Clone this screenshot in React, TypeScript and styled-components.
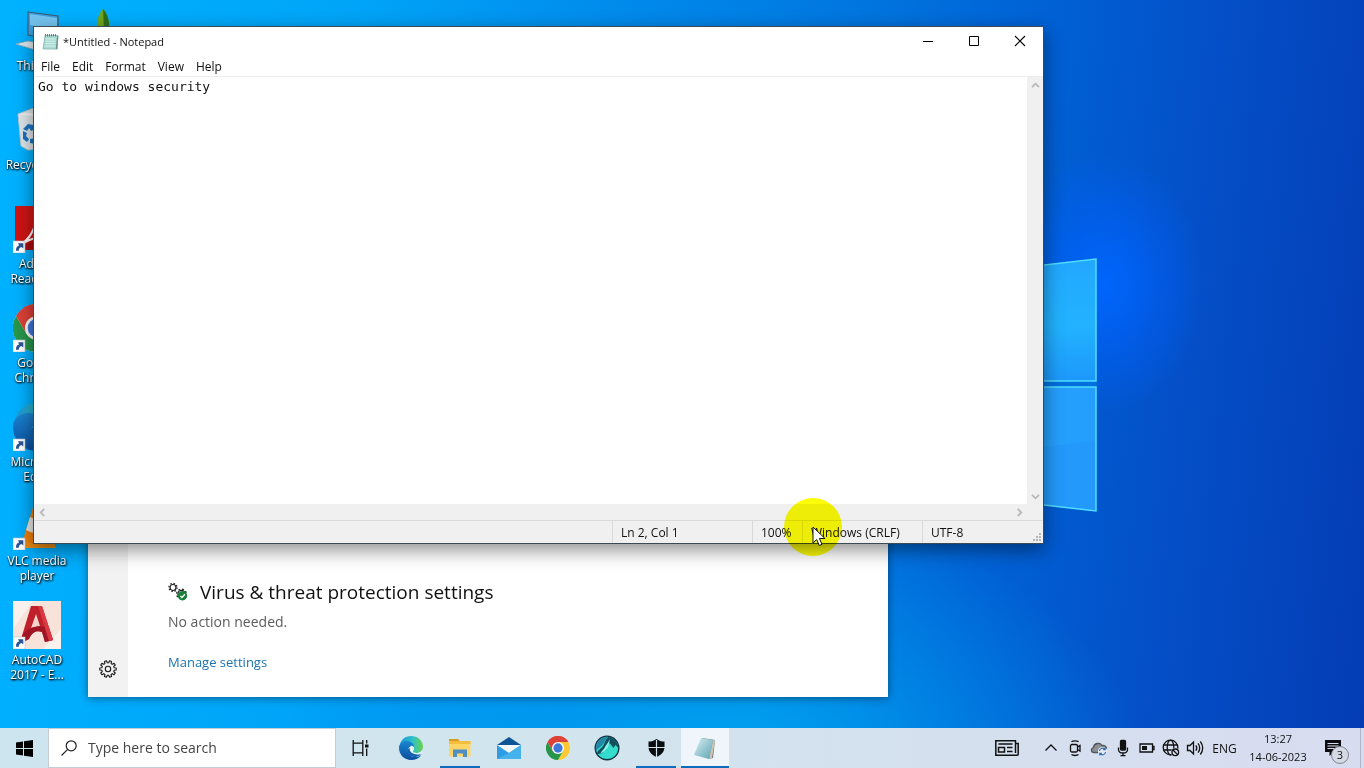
import React from "react";
import styled, { createGlobalStyle, css } from "styled-components";

const GlobalStyle = createGlobalStyle`
  *, *::before, *::after { box-sizing: border-box; }
  html, body, #root { height: 100%; }
  body { margin: 0; overflow: hidden; font-family: "Open Sans", "Noto Sans", sans-serif; font-size: 12px; color: #111; }
  button { font: inherit; color: inherit; border: 0; padding: 0; background: none; }
  svg { display: block; }
`;

const Screen = styled.div`
  position: relative;
  height: 100vh;
  display: flex;
  flex-direction: column;
  background:
    radial-gradient(ellipse 100px 130px at 81% 37%, rgba(0, 102, 255, 0.95), rgba(0, 98, 255, 0.5) 50%, rgba(0, 90, 240, 0) 100%),
    radial-gradient(ellipse 460px 300px at 55% 100%, rgba(0, 178, 246, 0.75), rgba(0, 150, 240, 0) 85%),
    linear-gradient(96deg, #00b2ff 0%, #00a4f8 25%, #008cec 42%, #0078e0 58%, #0062d6 72%, #0450c8 84%, #043cb4 100%);
`;

const Wallpaper = styled.svg`
  position: absolute;
  inset: 0;
  width: 100%;
  height: 100%;
`;

const Desktop = styled.main`
  position: relative;
  flex: 1;
  min-height: 0;
  overflow: hidden;
`;

const IconGrid = styled.div`
  display: grid;
  grid-auto-flow: column;
  grid-template-rows: repeat(7, 99px);
  grid-auto-columns: 74px;
  justify-content: start;
  padding-top: 7px;
`;

const Shortcut = styled.button`
  display: flex;
  flex-direction: column;
  align-items: center;
  gap: 3px;
  color: #fff;
  line-height: 15px;
  text-align: center;
  text-shadow: 1px 1px 2px #000, 0 1px 2px rgba(0, 0, 0, 0.8);
`;

const ShortcutArt = styled.svg`
  width: 48px;
  height: 48px;
`;

const ShortcutLabel = styled.span`
  width: 68px;
`;

const windowFrame = css`
  position: absolute;
  background: #fff;
  display: flex;
`;

const SecurityWindow = styled.section`
  ${windowFrame}
  inset: 120px 476px 31px 88px;
  box-shadow: 0 1px 8px rgba(0, 0, 0, 0.45);
`;

const Rail = styled.nav`
  width: 40px;
  padding-bottom: 8px;
  background: #f2f2f2;
  display: flex;
  flex-direction: column;
  justify-content: flex-end;
`;

const RailButton = styled.button`
  height: 40px;
  display: grid;
  place-items: center;
`;

const SecurityContent = styled.div`
  flex: 1;
  padding: 25px 40px;
  display: flex;
  flex-direction: column;
  justify-content: flex-end;
  align-items: flex-start;
`;

const SecurityHeading = styled.h2`
  margin: 0 0 6px;
  display: flex;
  align-items: center;
  gap: 12px;
  font-size: 19px;
  font-weight: 400;
  line-height: 28px;
`;

const SecurityStatus = styled.p`
  margin: 0 0 20px;
  font-size: 14px;
  line-height: 20px;
  color: #5c5c5c;
`;

const SecurityLink = styled.a`
  font-size: 13px;
  line-height: 20px;
  color: #1a73ad;
  text-decoration: none;
`;

const NotepadWindow = styled.section`
  ${windowFrame}
  flex-direction: column;
  inset: 26px 320px 184px 33px;
  border: 1px solid #3c4a55;
  box-shadow: 0 6px 18px rgba(0, 0, 0, 0.45);
`;

const TitleBar = styled.header`
  height: 28px;
  padding-left: 8px;
  display: flex;
  align-items: center;
  gap: 4px;
`;

const Title = styled.h1`
  margin: 0;
  flex: 1;
  font-size: 11px;
  font-weight: 400;
`;

const Captions = styled.div`
  display: flex;
  align-self: stretch;
`;

const CaptionButton = styled.button`
  width: 46px;
  display: grid;
  place-items: center;
`;

const MenuBar = styled.nav`
  height: 22px;
  display: flex;
  padding: 2px 1px 1px;
  border-bottom: 1px solid #ededed;
`;

const MenuItem = styled.button`
  padding: 0 6px;
`;

const Editor = styled.div`
  flex: 1;
  min-height: 0;
  display: grid;
  grid-template: 1fr 16px / 1fr 16px;
  background: #f0f0f0;
`;

const TextArea = styled.textarea`
  border: 0;
  outline: 0;
  resize: none;
  overflow: hidden;
  padding: 1px 4px;
  background: #fff;
  color: #111;
  font: 13px/17px "DejaVu Sans Mono", monospace;
`;

const ScrollBar = styled.div<{ $vertical?: boolean }>`
  display: flex;
  flex-direction: ${(p) => (p.$vertical ? "column" : "row")};
  justify-content: space-between;
`;

const ScrollButton = styled.button`
  width: 16px;
  height: 16px;
  display: grid;
  place-items: center;
`;

const StatusBar = styled.footer`
  height: 23px;
  display: grid;
  grid-template-columns: 1fr 140px 50px 120px 121px;
  align-items: stretch;
  background: #f0f0f0;
  border-top: 1px solid #dadada;
`;

const StatusCell = styled.span`
  display: flex;
  align-items: center;
  padding-left: 8px;
  padding-top: 1px;
  border-left: 1px solid #dadada;
  white-space: nowrap;
  &:first-child { border-left: 0; }
  &:last-child { justify-content: space-between; }
`;

const Grip = styled.svg`
  align-self: flex-end;
`;

const Halo = styled.div`
  position: absolute;
  left: 784px;
  top: 498px;
  width: 58px;
  height: 58px;
  border-radius: 50%;
  background: #fcfc08;
  mix-blend-mode: multiply;
`;

const Pointer = styled.svg`
  position: absolute;
  left: 812px;
  top: 526px;
`;

const Taskbar = styled.footer`
  position: relative;
  height: 40px;
  display: flex;
  background: linear-gradient(90deg, #cde5ef 0%, #d2e5ee 40%, #d4e1ee 65%, #d8dcf0 100%);
`;

const TaskButton = styled.button<{ $open?: boolean; $active?: boolean }>`
  position: relative;
  width: 48px;
  display: grid;
  place-items: center;
  background: ${(p) => (p.$active ? "#eff5fb" : "none")};
  &::after {
    content: "";
    position: absolute;
    bottom: 0;
    left: ${(p) => (p.$active ? 0 : "4px")};
    right: ${(p) => (p.$active ? 0 : "4px")};
    height: 2px;
    background: ${(p) => (p.$open || p.$active ? "#0f6cbd" : "transparent")};
  }
`;

const SearchBox = styled.label`
  width: 288px;
  display: flex;
  align-items: center;
  gap: 11px;
  padding: 0 12px;
  background: #fff;
  border: 1px solid #c3cdd2;
`;

const SearchInput = styled.input`
  flex: 1;
  min-width: 0;
  border: 0;
  outline: 0;
  padding: 0;
  background: none;
  font: 14px/20px "Open Sans", "Noto Sans", sans-serif;
  &::placeholder { color: #444; opacity: 1; }
`;

const Apps = styled.div`
  display: flex;
  gap: 1px;
  padding-left: 3px;
  flex: 1;
`;

const Tray = styled.div`
  display: flex;
`;

const TrayButton = styled.button<{ $width?: number }>`
  width: ${(p) => p.$width ?? 24}px;
  display: grid;
  place-items: center;
`;

const NewsButton = styled(TrayButton)`
  margin-right: 12px;
`;

const Clock = styled.button`
  width: 72px;
  font-size: 11px;
  line-height: 18px;
`;

const ActionButton = styled(TrayButton)`
  position: relative;
  margin-right: 8px;
`;

const Badge = styled.span`
  position: absolute;
  left: 17px;
  top: 18px;
  width: 18px;
  height: 18px;
  border: 1px solid #83868c;
  border-radius: 50%;
  background: #d6dae4;
  font-size: 11px;
  line-height: 16px;
  text-align: center;
`;

const ShowDesktop = styled.button`
  width: 4px;
  border-left: 1px solid #aeb6c6;
`;

const LinkArrow = () => (
  <g>
    <rect x="0" y="36" width="12" height="12" fill="#fff" stroke="#b8c4cc" strokeWidth=".6" />
    <path d="M3 45.8c-.2-3 1-5 3.200-5.400L5 38.300h5.300v5.300L8.500 42c-1.800.6-2.700 1.700-2.700 3.800z" fill="#2a5599" />
  </g>
);

const ChromeShape = () => (
  <>
    <circle cx="24" cy="24" r="24" fill="#fff" />
    <path d="M24 24 3.200 12A24 24 0 0 1 44.800 12z" fill="#dd4137" />
    <path d="M24 12H44.800A24 24 0 0 1 24 48L34.400 30z" fill="#fcc934" />
    <path d="M13.600 30 3.200 12A24 24 0 0 0 24 48L34.400 30z" fill="#27964b" />
    <path d="M24 12H44.800A24 24 0 0 0 3.200 12L13.600 30z" fill="#dd4137" />
    <circle cx="24" cy="24" r="12" fill="#fff" />
    <circle cx="24" cy="24" r="9.300" fill="#3f78dc" />
  </>
);

const EdgeShape = ({ id }: { id: string }) => (
  <>
    <defs>
      <linearGradient id={id + "a"} x1="0" y1=".3" x2="1" y2=".3">
        <stop offset="0" stopColor="#1c92d8" />
        <stop offset=".55" stopColor="#2cc0c8" />
        <stop offset="1" stopColor="#6bd24e" />
      </linearGradient>
      <linearGradient id={id + "b"} x1="0" y1="0" x2="0" y2="1">
        <stop offset="0" stopColor="#1a86d2" />
        <stop offset="1" stopColor="#0b4d9e" />
      </linearGradient>
    </defs>
    <path d="M1 21C3 8 12 0 24 0c14 0 24 10 24 21 0 8-6 13-13 13-5 0-8-2-7-4 5-5 1-14-8-14-9 0-17 1-19 5z" fill={`url(#${id}a)`} />
    <path d="M0 24c0-8 7-14 15-14 9 0 15 6 15 12-3-3-10-2-12 5-2 8 6 16 15 15 5 0 9-2 12-4-5 7-12 10-21 10C11 48 0 38 0 24z" fill={`url(#${id}b)`} />
    <path d="M18 27c-3 8 5 16 15 15 5-1 8-3 12-5-8 1-18-1-19-10-3-4-7-3-8 0z" fill="#1461ae" />
    <path d="M25 19c-5 3-5 11 1 15 6 4 14 3 19 0 1-2 2-4 2-5-3 4-8 5-12 5-5 0-8-2-7-4 4-3 2-9-3-11z" fill="#e3f2f6" />
  </>
);

const ShieldIcon = () => (
  <svg width="17" height="18" viewBox="0 0 17 18">
    <path d="M8.500 0c2.400 1.700 4.900 2.500 8 2.600V8c0 4.800-3.200 7.900-8 10C3.700 15.900.5 12.800.5 8V2.600c3.100-.1 5.600-.9 8-2.600z" fill="#0b0d10" />
    <path d="M8.500 1v17M0 8.500h17" stroke="#d4e3ee" strokeWidth="1.200" />
  </svg>
);

const NotepadIcon = () => (
  <svg width="17" height="17" viewBox="0 0 17 17">
    <path d="M3 2.500h13l-1 13.500H1z" fill="#a9dcd2" stroke="#86b3ae" strokeWidth=".8" />
    <path d="M15 3h1.300l-1 13-1.500.3z" fill="#6d9092" />
    <path d="M4 6h9.500M3.800 8.300h9.500M3.600 10.600h9.500M3.300 13h9.500" stroke="#d6efeb" strokeWidth=".9" />
    <path d="M3.500 1v2.500M5.500 1v2.500M7.500 1v2.500M9.500 1v2.500M11.500 1v2.500M13.500 1v2.500" stroke="#50777a" strokeWidth=".9" />
  </svg>
);

const Gear = ({ size, teeth = 8 }: { size: number; teeth?: number }) => {
  const points: string[] = [];
  for (let i = 0; i < teeth; i++) {
    const step = (Math.PI * 2) / teeth;
    [[-0.32, 6.3], [-0.2, 8.3], [0.2, 8.3], [0.32, 6.3]].forEach(([offset, radius]) => {
      const angle = (i + offset) * step;
      points.push(`${(9 + radius * Math.cos(angle)).toFixed(2)},${(9 + radius * Math.sin(angle)).toFixed(2)}`);
    });
  }
  return (
    <svg width={size} height={size} viewBox="0 0 18 18" fill="none" stroke="#1a1a1a" strokeWidth="1.100" strokeLinejoin="round">
      <polygon points={points.join(" ")} />
      <circle cx="9" cy="9" r="2.700" />
    </svg>
  );
};

const SettingsGears = () => (
  <svg width="20" height="20" viewBox="0 0 20 20" fill="none">
    <circle cx="5" cy="5.500" r="3" stroke="#222" strokeWidth="1.200" />
    <circle cx="5" cy="5.500" r="4.100" stroke="#222" strokeWidth="1.200" strokeDasharray="1.500 1.720" />
    <circle cx="13.500" cy="12" r="3.600" stroke="#222" strokeWidth="1.200" />
    <circle cx="13.500" cy="12" r="4.900" stroke="#222" strokeWidth="1.200" strokeDasharray="1.900 1.950" />
    <circle cx="14.500" cy="13.800" r="4.700" fill="#16803a" />
    <path d="m12.300 13.900 1.600 1.600 3-3.200" stroke="#fff" strokeWidth="1.300" />
  </svg>
);

const Chevron = ({ turn }: { turn: number }) => (
  <svg width="9" height="9" viewBox="0 0 9 9">
    <path d="M1 6.200 4.500 2.700 8 6.200" fill="none" stroke="#b9b9b9" strokeWidth="1.800" transform={`rotate(${turn} 4.500 4.500)`} />
  </svg>
);

const shortcuts: { name: string; label?: string; art: React.ReactNode }[] = [
  {
    name: "pc",
    label: "This PC",
    art: (
      <>
        <path d="M15 5 45 9v25L15 28z" fill="#3c9fe0" stroke="#3c5c74" strokeWidth="1.200" />
        <path d="M17 7 44 11v12L17 18z" fill="#74c4ef" />
        <path d="m3 37 12-3 26 5-12 6z" fill="#dfe9ee" stroke="#93aab8" strokeWidth=".8" />
      </>
    ),
  },
  {
    name: "bin",
    label: "Recycle Bin",
    art: (
      <>
        <path d="M5 8 21 2l22 4-5 36-23 2-7-4z" fill="#dfe6ea" stroke="#b9c8d0" strokeWidth="1" />
        <path d="m5 8 16-1 22-1-15 5z" fill="#f6f8f9" />
        <path d="m15 18 5 1 2 4-4 2-2-3-2 3-4-2zM10 25l4 2-1 3 3 3-2 3-4-3zM17 33l6-1 1-4 3 6-4 4-6-1z" fill="#1c74c4" />
      </>
    ),
  },
  {
    name: "reader",
    label: "Adobe Reader XI",
    art: (
      <>
        <rect x="2" y="1" width="44" height="44" fill="#cf1415" />
        <path d="M2 45h44V22z" fill="#a80c0d" />
        <path d="M8 39c8-4 14-15 15-24 0-6 4-6 3 0-1 6 4 15 15 16-10-1-22 2-33 8z" fill="none" stroke="#fff" strokeWidth="2" />
        <LinkArrow />
      </>
    ),
  },
  { name: "chrome", label: "Google Chrome", art: <><ChromeShape /><LinkArrow /></> },
  { name: "edge", label: "Microsoft Edge", art: <><EdgeShape id="desk" /><LinkArrow /></> },
  {
    name: "vlc",
    label: "VLC media player",
    art: (
      <>
        <path d="M8 37h32l3 9H5z" fill="#ee8a12" />
        <path d="M21 2h6l11 36c-7 5-21 5-28 0z" fill="#f07f0c" />
        <path d="m17 15-4 13c6 4 16 4 22 0l-4-13c-4 2-10 2-14 0z" fill="#e9e9e6" />
        <LinkArrow />
      </>
    ),
  },
  {
    name: "autocad",
    label: "AutoCAD 2017 - E...",
    art: (
      <>
        <rect width="48" height="48" fill="#f7e3da" />
        <path d="M0 0h20L0 28zM48 48H30l18-20z" fill="#f9f1ec" />
        <path d="M18 5h11l11 34-8 2-3-10c-5-2-10 0-13 7l-6 3-2-3z" fill="#c01f2c" />
        <path d="m23 13 4 12c-4 0-8 2-10 5z" fill="#f4d5cb" />
        <path d="M8 38c4-10 12-15 28-11l4 12-8 2-3-10c-6-2-10 0-13 7l-6 3z" fill="#a01524" />
        <path d="M29 5 40 39l-4 1L25 5z" fill="#d93a42" />
        <LinkArrow />
      </>
    ),
  },
  {
    name: "draw",
    art: (
      <>
        <path d="M16 2c5 5 7 14 6 22h-12c-1-8 1-17 6-22z" fill="#6fa61f" />
        <path d="M16 2c5 5 7 14 6 22h-5z" fill="#2d6f1a" />
      </>
    ),
  },
];

const TrayGlyph = ({ children }: { children: React.ReactNode }) => (
  <svg width="18" height="18" viewBox="0 0 18 18" fill="none" stroke="#111" strokeWidth="1.300">
    {children}
  </svg>
);

export default function App() {
  return (
    <Screen>
      <GlobalStyle />
      <Wallpaper viewBox="0 0 1364 768" preserveAspectRatio="none" aria-hidden="true">
        <defs>
          <linearGradient id="pane" x1="0" y1="0" x2="0" y2="1">
            <stop offset="0" stopColor="#22a8ff" />
            <stop offset=".55" stopColor="#22b2ff" />
            <stop offset="1" stopColor="#1c98fb" />
          </linearGradient>
        </defs>
        <path d="M940 277 1096 259V381H940z" fill="url(#pane)" stroke="#4fe0ff" strokeWidth="1.500" />
        <path d="M940 387H1096V511L940 493z" fill="#2399fb" stroke="#4fe0ff" strokeWidth="1.500" />
        <path d="M940 382h157v4H940z" fill="#0070de" />
        <path d="M1040 448 1095 440V388H1040z" fill="#26a4ff" opacity=".6" />
      </Wallpaper>

      <Desktop>
        <IconGrid>
          {shortcuts.map((s) => (
            <Shortcut key={s.name} aria-label={s.label ?? s.name}>
              <ShortcutArt viewBox="0 0 48 48">{s.art}</ShortcutArt>
              {s.label && <ShortcutLabel>{s.label}</ShortcutLabel>}
            </Shortcut>
          ))}
        </IconGrid>

        <SecurityWindow aria-label="Windows Security">
          <Rail>
            <RailButton aria-label="Settings"><Gear size={18} teeth={10} /></RailButton>
          </Rail>
          <SecurityContent>
            <SecurityHeading><SettingsGears />Virus &amp; threat protection settings</SecurityHeading>
            <SecurityStatus>No action needed.</SecurityStatus>
            <SecurityLink href="#manage">Manage settings</SecurityLink>
          </SecurityContent>
        </SecurityWindow>

        <NotepadWindow aria-label="Notepad">
          <TitleBar>
            <NotepadIcon />
            <Title>*Untitled - Notepad</Title>
            <Captions>
              <CaptionButton aria-label="Minimize">
                <svg width="12" height="12" viewBox="0 0 12 12"><path d="M1 6.500h10" stroke="#000" /></svg>
              </CaptionButton>
              <CaptionButton aria-label="Maximize">
                <svg width="12" height="12" viewBox="0 0 12 12"><path d="M1.500 1.500h9v9h-9z" fill="none" stroke="#000" /></svg>
              </CaptionButton>
              <CaptionButton aria-label="Close">
                <svg width="12" height="12" viewBox="0 0 12 12"><path d="m1 1 10 10M11 1 1 11" stroke="#000" strokeWidth="1.100" /></svg>
              </CaptionButton>
            </Captions>
          </TitleBar>
          <MenuBar>
            {["File", "Edit", "Format", "View", "Help"].map((m) => <MenuItem key={m}>{m}</MenuItem>)}
          </MenuBar>
          <Editor>
            <TextArea aria-label="Text editor" defaultValue={"Go to windows security\n"} spellCheck={false} />
            <ScrollBar $vertical>
              <ScrollButton aria-label="Scroll up"><Chevron turn={0} /></ScrollButton>
              <ScrollButton aria-label="Scroll down"><Chevron turn={180} /></ScrollButton>
            </ScrollBar>
            <ScrollBar>
              <ScrollButton aria-label="Scroll left"><Chevron turn={270} /></ScrollButton>
              <ScrollButton aria-label="Scroll right"><Chevron turn={90} /></ScrollButton>
            </ScrollBar>
          </Editor>
          <StatusBar>
            <StatusCell />
            <StatusCell>Ln 2, Col 1</StatusCell>
            <StatusCell>100%</StatusCell>
            <StatusCell>Windows (CRLF)</StatusCell>
            <StatusCell>
              UTF-8
              <Grip width="12" height="12" viewBox="0 0 12 12" fill="#b5b5b5">
                <path d="M8 2h2v2H8zM8 5h2v2H8zM5 5h2v2H5zM8 8h2v2H8zM5 8h2v2H5zM2 8h2v2H2z" />
              </Grip>
            </StatusCell>
          </StatusBar>
        </NotepadWindow>

        <Halo />
        <Pointer width="14" height="21" viewBox="0 0 14 21">
          <path d="M1 1v16l3.700-3.500 2.600 6 2.700-1.200-2.600-5.800H13z" fill="#fff" stroke="#111" strokeWidth="1" strokeLinejoin="round" />
        </Pointer>
      </Desktop>

      <Taskbar>
        <TaskButton aria-label="Start">
          <svg width="17" height="17" viewBox="0 0 17 17"><path d="M0 2.400 7 1.400V8H0zM8 1.200 17 0v8H8zM0 9h7v6.600L0 14.600zM8 9h9v8l-9-1.200z" fill="#000" /></svg>
        </TaskButton>
        <SearchBox>
          <svg width="16" height="16" viewBox="0 0 16 16" fill="none" stroke="#222" strokeWidth="1.200"><circle cx="10.200" cy="5.800" r="5" /><path d="M6.700 9.300.5 15.500" /></svg>
          <SearchInput type="text" aria-label="Search" placeholder="Type here to search" />
        </SearchBox>
        <TaskButton aria-label="Task view">
          <svg width="17" height="16" viewBox="0 0 17 16" fill="none" stroke="#111" strokeWidth="1.300">
            <path d="M1.200 0v3.200h9.600V0M1.200 16v-3.200h9.600V16M1.200 3.200v9.600M10.800 3.200v9.600M14.700 0v3.500M14.700 8.500V16" />
            <path d="M13 4.500h3.500v3H13z" fill="#111" stroke="none" />
          </svg>
        </TaskButton>
        <Apps>
          <TaskButton aria-label="Microsoft Edge">
            <svg width="24" height="24" viewBox="0 0 48 48"><EdgeShape id="bar" /></svg>
          </TaskButton>
          <TaskButton aria-label="File Explorer" $open>
            <svg width="24" height="22" viewBox="0 0 24 22">
              <path d="M1 2h9l2 2.500H1z" fill="#d89b20" />
              <path d="M1 4h21.500v15.500H1z" fill="#fbd566" />
              <path d="M1 4h21.500v3H1z" fill="#f4bd3c" />
              <path d="M5 20v-7.500h14V20h-4v-3.500H9V20z" fill="#4f8fc4" />
            </svg>
          </TaskButton>
          <TaskButton aria-label="Mail">
            <svg width="26" height="24" viewBox="0 0 26 24">
              <path d="M1 9 13 1l12 8z" fill="#0e5596" />
              <path d="M2 9h22v8H2z" fill="#f2f8fb" />
              <path d="M1 9v14h24V9l-12 8z" fill="#2d9ce2" />
              <path d="M1 23 13 17l12-8v14z" fill="#45b2ee" />
            </svg>
          </TaskButton>
          <TaskButton aria-label="Google Chrome">
            <svg width="24" height="24" viewBox="0 0 48 48"><ChromeShape /></svg>
          </TaskButton>
          <TaskButton aria-label="GameLoop">
            <svg width="26" height="26" viewBox="0 0 26 26">
              <circle cx="13" cy="13" r="11.800" fill="#34dccb" stroke="#15323f" strokeWidth="1.400" />
              <path d="M2 16C.5 8 6 1.500 14 1.500c-3 3-3 6-6 9-2 2-4 3-6 5.500z" fill="#2388a6" />
              <path d="M14 2c5 0 10 5 10.500 11l-3-3-2 3-4-5c-1 3-4 5-5 7-1 3-4 4-7.500 4 0-4 4-5 6-8 2-3 2-6 5-9z" fill="#12505f" />
              <path d="M15.500 4c-1 4-4 6-5 9-1 2-3 3-4 5 4 0 5-4 7-5 1-2 2-4 2-9z" fill="#8af3ea" />
            </svg>
          </TaskButton>
          <TaskButton aria-label="Windows Security" $open><ShieldIcon /></TaskButton>
          <TaskButton aria-label="Notepad" $active>
            <svg width="24" height="23" viewBox="0 0 24 23">
              <defs>
                <linearGradient id="page" x1="0" y1="0" x2="1" y2="1">
                  <stop offset="0" stopColor="#d9f0f3" />
                  <stop offset="1" stopColor="#5da3b4" />
                </linearGradient>
              </defs>
              <path d="m9 1 13 2-2 18-4 1z" fill="#6d7577" />
              <path d="m8 1 12 2-4 19L1 18z" fill="url(#page)" />
              <path d="m20 3 2 .3L19 21l-3 1z" fill="#c9c6b8" />
            </svg>
          </TaskButton>
        </Apps>
        <Tray>
          <NewsButton aria-label="News and interests" $width={40}>
            <svg width="24" height="16" viewBox="0 0 24 16" fill="none" stroke="#111" strokeWidth="1.500">
              <path d="M20.500 4V.8H.8v14.400h21.400c1 0 1-.5 1-1.200V3.500h-2.700V13M3.500 4h14M3.500 7.500h6V12h-6zM12 7.500h5.500M12 11.500h5.500" />
            </svg>
          </NewsButton>
          <TrayButton aria-label="Show hidden icons"><TrayGlyph><path d="m3.500 11.500 5.500-5.500 5.500 5.500" /></TrayGlyph></TrayButton>
          <TrayButton aria-label="Meet now">
            <TrayGlyph><rect x="4.500" y="5.500" width="7" height="7.500" rx="1.500" /><path d="m11.500 8 2.500-1.500v5.500L11.500 10.500M5.500 2.800C7 1.500 11 1.500 12.500 2.800M5.500 15.500c1.500 1.300 5.500 1.300 7 0" /></TrayGlyph>
          </TrayButton>
          <TrayButton aria-label="OneDrive">
            <TrayGlyph>
              <path d="M4 13.500C1 13.500.5 9.500 3.500 8.500 4 4 10 3 12 6.500c3-.5 4.500 1.500 4.500 3L10 13.500z" fill="#8d9196" stroke="#50555a" />
              <circle cx="12.500" cy="12.500" r="4.600" fill="#e4eaf4" stroke="none" />
              <path d="M9.500 12a3 3 0 0 1 5.500-1.500M15.500 13a3 3 0 0 1-5.500 1.500M15.200 8.500v2.300H13M9.800 16.500v-2.300H12" stroke="#2b6ca8" strokeWidth="1.100" />
            </TrayGlyph>
          </TrayButton>
          <TrayButton aria-label="Microphone">
            <TrayGlyph><rect x="6.500" y="1.500" width="5" height="9.500" rx="1" fill="#111" /><path d="M4.500 8.500v2c0 2 1.500 3.500 4.500 3.500s4.500-1.500 4.500-3.500v-2M9 14v2.500M6.500 16.700h5" /></TrayGlyph>
          </TrayButton>
          <TrayButton aria-label="Battery">
            <TrayGlyph><path d="M2 5h12.500v8H2zM14.500 7.500H16v3h-1.500" /><path d="M4 7h5v4H4z" fill="#111" stroke="none" /></TrayGlyph>
          </TrayButton>
          <TrayButton aria-label="Network">
            <TrayGlyph>
              <circle cx="8.500" cy="8.500" r="7.300" /><ellipse cx="8.500" cy="8.500" rx="3.300" ry="7.300" /><path d="M1.500 6h14M1.500 11h14" />
              <circle cx="13.300" cy="13.300" r="4.400" fill="#d7deef" stroke="none" /><circle cx="13.300" cy="13.300" r="3.300" /><path d="m11 11 4.600 4.600" />
            </TrayGlyph>
          </TrayButton>
          <TrayButton aria-label="Volume">
            <TrayGlyph><path d="M1.500 6.500H4L7.500 3v12L4 11.500H1.500zM9.800 6.300c1.200 1.600 1.200 3.800 0 5.400M12 4.300c2.300 2.700 2.300 6.700 0 9.400M14.300 2.500c3.200 3.800 3.200 9.200 0 13" /></TrayGlyph>
          </TrayButton>
          <TrayButton aria-label="Language" $width={35}>ENG</TrayButton>
          <Clock aria-label="Date and time">13:27<br />14-06-2023</Clock>
          <ActionButton aria-label="Notifications" $width={38}>
            <svg width="18" height="17" viewBox="0 0 18 17"><path d="M1 0h16v12H9.500L5.500 16v-4H1z" fill="#0c0c10" /><path d="M3.500 3.500h11M3.500 6h11M3.500 8.500h11" stroke="#d8dcf0" /></svg>
            <Badge>3</Badge>
          </ActionButton>
          <ShowDesktop aria-label="Show desktop" />
        </Tray>
      </Taskbar>
    </Screen>
  );
}
